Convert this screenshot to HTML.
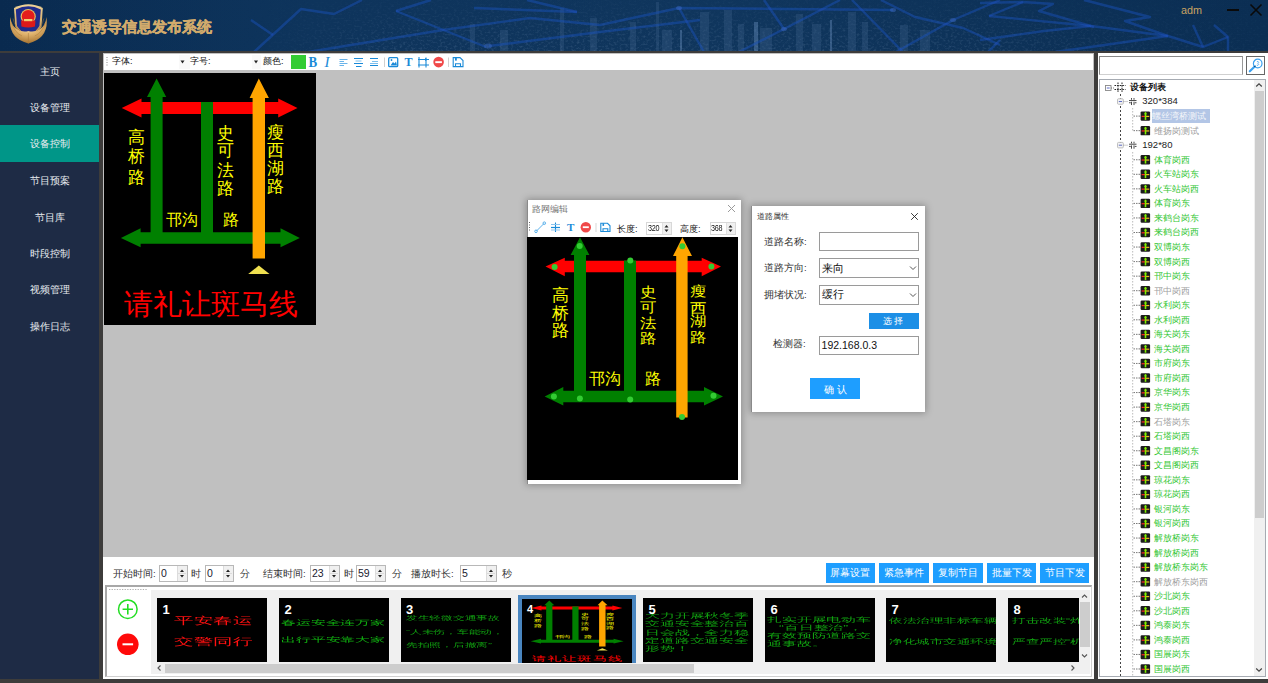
<!DOCTYPE html>
<html><head><meta charset="utf-8">
<style>
*{margin:0;padding:0;box-sizing:border-box}
html,body{width:1268px;height:683px;overflow:hidden;background:#3d3c3b;font-family:"Liberation Sans",sans-serif;position:relative}
.abs{position:absolute}
.t{position:absolute;white-space:nowrap;line-height:1}
#hdr{left:0;top:0;width:1268px;height:51px;background:linear-gradient(90deg,#092a4f 0%,#0a2f56 20%,#0b3056 55%,#0b2f55 80%,#0b2e53 100%);overflow:hidden}
#title{left:62.3px;top:18.9px;font-size:15.3px;font-weight:bold;color:#d2ab6c;-webkit-text-stroke:0.35px #d2ab6c}
#adm{left:1181px;top:5.3px;font-size:10.8px;color:#c8a262}
#side{left:0;top:53px;width:99px;height:626px;background:#1e2b45}
.mi{position:absolute;left:0;width:99px;height:37px;line-height:37px;text-align:center;color:#e8ecf0;font-size:10px}
.mi.act{background:#009688}
#main{left:103px;top:53px;width:991px;height:504px;background:#c0c0c0}
#tb{left:104px;top:54px;width:989px;height:16px;background:#fff}
#right{left:1098px;top:53px;width:170px;height:626px;background:#fff}
#bot{left:103px;top:557px;width:991px;height:122px;background:#fff}
.tbt{font-size:9px;color:#111;top:57px}
</style></head><body>
<div id="hdr" class="abs">
 <svg class="abs" style="left:0;top:0" width="1268" height="51">
  <defs>
   <linearGradient id="cityg" x1="0" x2="1" y1="0" y2="0"><stop offset="0" stop-color="#18406a" stop-opacity="0"/><stop offset="0.25" stop-color="#18406a" stop-opacity="0.3"/><stop offset="0.6" stop-color="#18406a" stop-opacity="0.35"/><stop offset="0.85" stop-color="#18406a" stop-opacity="0.1"/><stop offset="1" stop-color="#18406a" stop-opacity="0"/></linearGradient>
   <filter id="soft"><feGaussianBlur stdDeviation="0.7"/></filter>
   <filter id="noise" x="0" y="0" width="100%" height="100%"><feTurbulence type="fractalNoise" baseFrequency="0.35 0.5" numOctaves="2" seed="3"/><feColorMatrix type="matrix" values="0 0 0 0 0.35  0 0 0 0 0.5  0 0 0 0 0.7  0 0 0 1.6 -0.75"/></filter>
   <linearGradient id="vfade" x1="0" x2="0" y1="0" y2="1"><stop offset="0" stop-color="#fff" stop-opacity="0.2"/><stop offset="1" stop-color="#fff" stop-opacity="1"/></linearGradient>
   <mask id="cm"><rect x="0" y="0" width="1268" height="51" fill="url(#vfade)"/></mask>
  </defs>
  <rect x="0" y="0" width="1268" height="51" fill="url(#cityg)"/>
  <linearGradient id="hfade" x1="0" x2="1" y1="0" y2="0"><stop offset="0" stop-color="#fff" stop-opacity="0"/><stop offset="0.15" stop-color="#fff" stop-opacity="1"/><stop offset="0.7" stop-color="#fff" stop-opacity="1"/><stop offset="1" stop-color="#fff" stop-opacity="0.25"/></linearGradient>
  <mask id="cm2"><rect x="240" y="0" width="1028" height="51" fill="url(#hfade)"/></mask>
  <g mask="url(#cm2)"><g mask="url(#cm)"><rect x="240" y="0" width="1028" height="51" filter="url(#noise)" opacity="0.3"/></g></g>
  <g fill="#3a5f88" opacity="0.35" filter="url(#soft)">
   <rect x="656" y="2" width="3" height="49"/><rect x="662" y="30" width="10" height="21"/><rect x="700" y="12" width="9" height="39"/>
   <rect x="724" y="10" width="8" height="41"/><rect x="738" y="24" width="6" height="27"/><rect x="760" y="28" width="12" height="23"/>
   <rect x="796" y="14" width="7" height="37"/><rect x="812" y="24" width="9" height="27"/><rect x="848" y="12" width="8" height="39"/>
   <rect x="862" y="22" width="6" height="29"/><rect x="900" y="25" width="8" height="26"/><rect x="920" y="30" width="10" height="21"/>
   <rect x="560" y="8" width="4" height="43"/><rect x="590" y="18" width="7" height="33"/><rect x="630" y="22" width="6" height="29"/>
   <rect x="470" y="24" width="5" height="27"/><rect x="500" y="30" width="8" height="21"/>
  </g>
  <g fill="#7aa0d0" opacity="0.35"><rect x="754" y="22" width="4" height="29"/><rect x="680" y="30" width="2" height="21"/><rect x="830" y="20" width="2" height="31"/></g>
  <g stroke="#1d52c0" stroke-opacity="0.45" stroke-width="2.4" fill="none" stroke-linejoin="round" filter="url(#soft)">
   <path d="M254 52 L301 9 L334 14 L362 0"/>
   <path d="M251 20 L273 35"/>
   <path d="M308 52 L443 30 L530 18 L600 25 L679 8 L893 10"/>
   <path d="M396 11 L486 47"/>
   <path d="M396 11 L431 0"/>
   <path d="M474 8 L577 12"/>
   <path d="M489 46 L600 32 L700 20"/>
   <path d="M527 0 L577 12"/>
   <path d="M679 8 L704 52"/>
   <path d="M764 0 L784 29 L739 52"/>
   <path d="M784 29 L840 0"/>
   <path d="M852 0 L903 52"/>
   <path d="M881 0 L915 17 L963 28 L1000 45"/>
   <path d="M896 52 L953 20 L1000 0"/>
   <path d="M988 52 L1000 40"/>
   <path d="M980 3 L1023 2 L1053 4 L1039 11 L1094 27"/>
   <path d="M989 16 L1023 2"/>
   <path d="M989 16 L1091 26 L1168 36 L1203 47 L1228 37"/>
   <path d="M1084 0 L1150 17 L1125 21 L1168 36"/>
   <path d="M980 40 L1044 31 L1091 26"/>
   <path d="M1055 52 L1168 36"/>
   <path d="M1193 25 L1203 47"/>
   <path d="M1214 25 L1228 37 L1228 52"/>
  </g>
  <g fill="#3a68c0" opacity="0.5"><ellipse cx="488" cy="46" rx="4" ry="2.5"/><ellipse cx="679" cy="8" rx="3" ry="2"/><ellipse cx="784" cy="29" rx="3" ry="2"/><ellipse cx="893" cy="10" rx="3" ry="2"/><ellipse cx="953" cy="20" rx="3" ry="2"/></g>
 </svg>
 <svg class="abs" style="left:8px;top:3px" width="42" height="42" viewBox="0 0 42 42">
  <defs><radialGradient id="gold" cx="50%" cy="30%" r="75%"><stop offset="0" stop-color="#f8e6b8"/><stop offset="0.5" stop-color="#deb06a"/><stop offset="1" stop-color="#9a6828"/></radialGradient>
  <linearGradient id="gold2" x1="0" y1="0" x2="0" y2="1"><stop offset="0" stop-color="#f0d498"/><stop offset="1" stop-color="#b8853e"/></linearGradient></defs>
  <path d="M6 5 Q20.4 -2.5 34.8 5 L33.5 24 Q28 33 20.4 36 Q12.8 33 7.3 24 Z" fill="url(#gold2)"/>
  <path d="M7.8 6.5 Q20.4 0 32.8 6.5 L31.4 23 Q26.5 30.5 20.4 33 Q14.3 30.5 9 23 Z" fill="#1f2c8c"/>
  <circle cx="20.2" cy="13.6" r="7.6" fill="#e6be60"/>
  <circle cx="20.2" cy="13.4" r="6.4" fill="#e41c1c"/>
  <path d="M13 17.5 H27.4 L27 23.5 Q20.2 25.5 13.4 23.5 Z" fill="#dc1a1a"/>
  <rect x="16" y="16" width="8.4" height="2.2" fill="#f0d070"/>
  <path d="M2.3 14 Q-0.5 35 20.4 40.5 Q41.3 35 38.5 14 Q37.5 23 31.5 26.5 Q26 29.5 20.4 28 Q14.8 29.5 9.3 26.5 Q3.3 23 2.3 14 Z" fill="url(#gold)"/>
  <g stroke="#a8783a" stroke-width="0.7" fill="none" opacity="0.7"><path d="M3.5 20 Q7 30 14 33 M5 15.5 Q7 24 12 28 M37.3 20 Q33.8 30 26.8 33 M35.8 15.5 Q33.8 24 28.8 28 M20.4 30 V40.5"/></g>
 </svg>
 <div id="title" class="t">交通诱导信息发布系统</div>
 <div id="adm" class="t">adm</div>
 <div class="abs" style="left:1227px;top:9px;width:12px;height:2px;background:#0a0a0a"></div>
 <svg class="abs" style="left:1249px;top:3px" width="14" height="14"><path d="M1.5 1.5 L12.5 12.5 M12.5 1.5 L1.5 12.5" stroke="#0a0a0a" stroke-width="1.6"/></svg>
</div>
<div id="side" class="abs">
 <div class="mi" style="top:0">主页</div>
 <div class="mi" style="top:36.4px">设备管理</div>
 <div class="mi act" style="top:72px">设备控制</div>
 <div class="mi" style="top:109.2px">节目预案</div>
 <div class="mi" style="top:145.6px">节目库</div>
 <div class="mi" style="top:182px">时段控制</div>
 <div class="mi" style="top:218.4px">视频管理</div>
 <div class="mi" style="top:254.8px">操作日志</div>
</div>
<div id="main" class="abs"></div>
<div id="tb" class="abs"></div>
<svg class="abs" style="left:104px;top:54px" width="989" height="16">
 <g fill="#888"><rect x="2.5" y="3" width="1" height="1"/><rect x="2.5" y="5.5" width="1" height="1"/><rect x="2.5" y="8" width="1" height="1"/><rect x="2.5" y="10.5" width="1" height="1"/></g>
 <rect x="75" y="1" width="11" height="14" fill="#f9f9f9"/>
 <path d="M76.5 6.5 L80.5 6.5 L78.5 9.5 Z" fill="#222"/>
 <rect x="148" y="1" width="9" height="14" fill="#f9f9f9"/>
 <path d="M150 6.5 L154 6.5 L152 9.5 Z" fill="#222"/>
 <rect x="187" y="1" width="15" height="14" fill="#33cc33"/>
 <text x="0" y="0" transform="translate(204.6 13.3) scale(0.84 1)" font-family="Liberation Serif" font-weight="bold" font-size="15.5" fill="#1a8ad8">B</text>
 <text x="220.5" y="13.3" font-family="Liberation Serif" font-style="italic" font-size="15" fill="#1a8ad8">I</text>
 <g stroke="#6ab4ea" stroke-width="1"><path d="M235.5 5.5 H243.5 M235.5 7.5 H240 M235.5 9.5 H243.5 M235.5 11.5 H240"/></g>
 <g stroke="#1a8ad8" stroke-width="1"><path d="M250 4.5 H259 M250 9.5 H259 M252 12.5 H257.5"/></g><g stroke="#7cc0ee" stroke-width="1"><path d="M251.5 7 H257.5"/></g>
 <g stroke="#1a8ad8" stroke-width="1"><path d="M266 4.5 H274 M266 11.5 H274"/></g><g stroke="#7cc0ee" stroke-width="1"><path d="M268 7.5 H274 M266 9.5 H274"/></g>
 <rect x="280" y="3.5" width="1" height="9.5" fill="#d0d0d0"/>
 <g fill="none" stroke="#1a8ad8" stroke-width="1.3"><rect x="284.7" y="3.7" width="9" height="9" rx="1"/></g>
 <path d="M286.5 11.5 L289 8 L290.5 9.5 L292 7.5 L293 11.5 Z" fill="#1a8ad8"/><circle cx="287.5" cy="6" r="0.9" fill="#1a8ad8"/>
 <text x="300.5" y="12" font-family="Liberation Serif" font-weight="bold" font-size="12" fill="#1a8ad8">T</text>
 <g stroke="#1a8ad8" stroke-width="1.1" fill="none"><path d="M315 3 V13.5 M322 3.5 V13.5 M314 5.5 H325 M314 11 H325"/></g><path d="M321 4 L324 5.5 L321 7 Z" fill="#1a8ad8"/>
 <circle cx="334.6" cy="8.1" r="5.3" fill="#f04848"/><rect x="331.3" y="7.2" width="6.6" height="1.9" fill="#fff"/>
 <rect x="344" y="3.5" width="1" height="9.5" fill="#d0d0d0"/>
 <g fill="none" stroke="#1a8ad8" stroke-width="1.1"><path d="M349.2 3.6 H356 L359 6.6 V12.6 H349.2 Z"/><path d="M351.5 12.6 V9.8 H356.5 V12.6"/></g><rect x="351" y="3.6" width="1.8" height="3" fill="#1a8ad8"/>
</svg>
<div class="t" style="left:112px;top:56.5px;font-size:9px;color:#111">字体:</div>
<div class="t" style="left:190px;top:56.5px;font-size:9px;color:#111">字号:</div>
<div class="t" style="left:263px;top:56.5px;font-size:9px;color:#111">颜色:</div>

<svg class="abs" style="left:104px;top:73px" width="212" height="252" viewBox="0 0 212 252"><g id="ledmain">
 <rect width="212" height="252" fill="#000"/>
 <!-- red arrow -->
 <path d="M17.7 35 L37.5 25.6 L37.5 29 L174.2 29 L174.2 25.6 L193.5 35 L174.2 44.6 L174.2 41 L37.5 41 L37.5 44.6 Z" fill="#ff0000"/>
 <!-- green horizontal -->
 <path d="M16.9 165 L36.6 155.3 L36.6 159.2 L176.5 159.2 L176.5 155.3 L195.8 165 L176.5 174.2 L176.5 170.7 L36.6 170.7 L36.6 174.2 Z" fill="#008000"/>
 <!-- green 1 -->
 <path d="M52.6 5.5 L62.2 24 L58.6 24 L58.6 165 L46.6 165 L46.6 24 L43 24 Z" fill="#008000"/>
 <rect x="97" y="29" width="12" height="136" fill="#008000"/>
 <!-- orange -->
 <path d="M154.8 5.5 L164.9 24.9 L161 24.9 L161 185.6 L148.6 185.6 L148.6 24.9 L145.6 24.9 Z" fill="#ffa500"/>
 <path d="M154.8 192.6 L165.5 201 L144.2 201 Z" fill="#f0e050"/>
 <g fill="#ffff00" font-size="16.5" font-family="Liberation Sans" text-anchor="middle">
  <text x="32.5" y="69.6">高</text><text x="32.5" y="88.8">桥</text><text x="32.5" y="110.3">路</text>
  <text x="121.5" y="66.1">史</text><text x="121.5" y="83.1">可</text><text x="121.5" y="102.9">法</text><text x="121.5" y="120.6">路</text>
  <text x="171" y="65.1">瘦</text><text x="171" y="82.7">西</text><text x="171" y="101.2">湖</text><text x="171" y="118.8">路</text>
  <text x="78" y="152.2" font-size="15.8">邗沟</text>
  <text x="127" y="152.2" font-size="15.8">路</text>
 </g>
 <text x="106.6" y="241" fill="#ff0000" font-size="28.8" font-family="Liberation Sans" text-anchor="middle">请礼让斑马线</text>
</g></svg>

<div class="abs" style="left:527px;top:199.5px;width:214px;height:284px;background:#fff;box-shadow:0 0 7px 1px rgba(0,0,0,0.28);border-left:1px solid #8a8a8a"></div>
<div class="t" style="left:532px;top:204.5px;font-size:9px;color:#777">路网编辑</div>
<svg class="abs" style="left:727px;top:204px" width="9" height="9"><path d="M1 1 L8 8 M8 1 L1 8" stroke="#9a9a9a" stroke-width="1"/></svg>
<svg class="abs" style="left:527px;top:219px" width="214" height="17">
 <g fill="#666"><rect x="2" y="3" width="1" height="1"/><rect x="2" y="5.5" width="1" height="1"/><rect x="2" y="8" width="1" height="1"/><rect x="2" y="10.5" width="1" height="1"/></g>
 <g stroke="#4aa8e8" stroke-width="0.9" fill="none"><path d="M9.5 12 L17 4.5"/><circle cx="9" cy="12.3" r="1.3"/><circle cx="17.3" cy="4.2" r="1.3"/></g>
 <g stroke="#1a8ad8" fill="none"><path d="M28.5 3.5 V13" stroke-width="1.1"/><path d="M24 8.5 H33" stroke-width="1.2"/><path d="M24 5.5 H33 M24 11 H33" stroke="#8cc4ee" stroke-width="1"/></g>
 <text x="40" y="12" font-family="Liberation Serif" font-weight="bold" font-size="11" fill="#1a8ad8">T</text>
 <circle cx="58.8" cy="8.2" r="5.2" fill="#f04848"/><rect x="55.8" y="7.3" width="6" height="1.8" fill="#fff"/>
 <rect x="68.5" y="4" width="1" height="9" fill="#d8d8d8"/>
 <g fill="none" stroke="#1a8ad8" stroke-width="1.1"><path d="M73.8 4.3 H80.5 L83 6.8 V12.5 H73.8 Z"/><path d="M76 12.5 V9.8 H80.8 V12.5"/></g><rect x="75.5" y="4.3" width="1.6" height="2.6" fill="#1a8ad8"/>
</svg>
<div class="t" style="left:617px;top:224.5px;font-size:9px;color:#111">长度:</div>
<div class="t" style="left:680px;top:224.5px;font-size:9px;color:#111">高度:</div>
<div class="abs" style="left:646px;top:222px;width:26px;height:13px;border:1px solid #d8d8d8;background:#fff"></div>
<div class="t" style="left:648px;top:223.5px;font-size:8.5px;color:#111;letter-spacing:-0.3px;transform:scaleX(0.85);transform-origin:left">320</div>
<div class="abs" style="left:662px;top:223px;width:9px;height:11px;background:#f0f0f0;border-left:1px solid #e0e0e0"></div>
<svg class="abs" style="left:662px;top:223px" width="9" height="11"><path d="M2.5 4.5 L4.5 2 L6.5 4.5 Z M2.5 6.5 L4.5 9 L6.5 6.5 Z" fill="#222"/></svg>
<div class="abs" style="left:710px;top:222px;width:26px;height:13px;border:1px solid #d8d8d8;background:#fff"></div>
<div class="t" style="left:711px;top:223.5px;font-size:8.5px;color:#111;letter-spacing:-0.3px;transform:scaleX(0.85);transform-origin:left">368</div>
<div class="abs" style="left:726px;top:223px;width:9px;height:11px;background:#f0f0f0;border-left:1px solid #e0e0e0"></div>
<svg class="abs" style="left:726px;top:223px" width="9" height="11"><path d="M2.5 4.5 L4.5 2 L6.5 4.5 Z M2.5 6.5 L4.5 9 L6.5 6.5 Z" fill="#222"/></svg>
<svg class="abs" style="left:527px;top:236.5px" width="211" height="243" viewBox="0 0 211 243">
 <rect width="211" height="243" fill="#000"/>
 <path d="M18.5 29.5 L37.8 20.7 L37.8 23.7 L174.7 23.7 L174.7 20.7 L194 29.5 L174.7 39.2 L174.7 35.3 L37.8 35.3 L37.8 39.2 Z" fill="#ff0000"/>
 <path d="M17.7 159.5 L36.3 150 L36.3 153.7 L177 153.7 L177 150 L196 159.5 L177 168.5 L177 165.3 L36.3 165.3 L36.3 168.5 Z" fill="#008000"/>
 <path d="M53 0.2 L62.4 18 L59 18 L59 160 L47 160 L47 18 L43.6 18 Z" fill="#008000"/>
 <rect x="97" y="23.5" width="12" height="136" fill="#008000"/>
 <path d="M155.4 0.2 L165 19 L160.6 19 L160.6 180.5 L149.2 180.5 L149.2 19 L146 19 Z" fill="#ffa500"/>
 <g fill="#ffff00" font-size="17" font-family="Liberation Sans" text-anchor="middle">
  <text x="33.6" y="64">高</text><text x="33.6" y="81.5">桥</text><text x="33.6" y="99">路</text>
  <text transform="translate(121.7 60.4) scale(1 0.85)">史</text><text transform="translate(121.7 75.2) scale(1 0.85)">可</text><text transform="translate(121.7 91.2) scale(1 0.85)">法</text><text transform="translate(121.7 105.9) scale(1 0.85)">路</text>
  <text transform="translate(171.5 58.8) scale(1 0.85)">瘦</text><text transform="translate(171.5 75.7) scale(1 0.85)">西</text><text transform="translate(171.5 89.2) scale(1 0.85)">湖</text><text transform="translate(171.5 105) scale(1 0.85)">路</text>
  <text x="78" y="147.2" font-size="16">邗沟</text>
  <text x="125.6" y="147.2" font-size="16">路</text>
 </g>
 <g fill="#33cc33">
  <circle cx="27.6" cy="29.9" r="3"/><circle cx="52.7" cy="9" r="3"/><circle cx="103.3" cy="23.4" r="3"/><circle cx="155.4" cy="9.3" r="3"/><circle cx="184.4" cy="29.5" r="3"/>
  <circle cx="26.9" cy="159.5" r="3"/><circle cx="52.9" cy="161.5" r="3"/><circle cx="103.2" cy="162.6" r="3"/><circle cx="155" cy="180" r="3"/><circle cx="186.5" cy="158.7" r="3"/>
 </g>
</svg>

<div class="abs" style="left:751px;top:206px;width:174px;height:206px;background:#fff;box-shadow:0 0 7px 1px rgba(0,0,0,0.28);border-left:1px solid #8a8a8a"></div>
<div class="t" style="left:757px;top:212px;font-size:8.3px;color:#333">道路属性</div>
<svg class="abs" style="left:910px;top:212px" width="9" height="9"><path d="M1.2 1.2 L7.8 7.8 M7.8 1.2 L1.2 7.8" stroke="#222" stroke-width="0.9"/></svg>
<div class="t" style="left:764px;top:237px;font-size:9.5px;color:#333">道路名称:</div>
<div class="t" style="left:764px;top:263px;font-size:9.5px;color:#333">道路方向:</div>
<div class="t" style="left:764px;top:290px;font-size:9.5px;color:#333">拥堵状况:</div>
<div class="t" style="left:773px;top:338.5px;font-size:9.5px;color:#333">检测器:</div>
<div class="abs" style="left:819px;top:232px;width:100px;height:19px;border:1px solid #9a9a9a;background:#fff"></div>
<div class="abs" style="left:819px;top:258px;width:100px;height:20px;border:1px solid #9a9a9a;background:#fff"></div>
<div class="t" style="left:822px;top:262.5px;font-size:11px;color:#111">来向</div>
<svg class="abs" style="left:909px;top:265px" width="8" height="6"><path d="M1 1.5 L4 4.5 L7 1.5" stroke="#555" stroke-width="1" fill="none"/></svg>
<div class="abs" style="left:819px;top:285px;width:100px;height:20px;border:1px solid #9a9a9a;background:#fff"></div>
<div class="t" style="left:822px;top:289px;font-size:11px;color:#111">缓行</div>
<svg class="abs" style="left:909px;top:292px" width="8" height="6"><path d="M1 1.5 L4 4.5 L7 1.5" stroke="#555" stroke-width="1" fill="none"/></svg>
<div class="abs" style="left:869px;top:313px;width:50px;height:16px;background:#1c8fe6"></div>
<div class="t" style="left:869px;top:316.5px;width:50px;text-align:center;font-size:9px;color:#fff;letter-spacing:2px">选择</div>
<div class="abs" style="left:819px;top:335.5px;width:100px;height:19px;border:1px solid #9a9a9a;background:#fff"></div>
<div class="t" style="left:821.6px;top:339.5px;font-size:10.5px;color:#111">192.168.0.3</div>
<div class="abs" style="left:810px;top:378px;width:50px;height:21px;background:#1e9eff"></div>
<div class="t" style="left:812px;top:384.5px;width:50px;text-align:center;font-size:9.5px;color:#fff;letter-spacing:3px">确认</div>

<div id="bot" class="abs"></div>
<div class="t" style="left:113px;top:568.5px;font-size:9.5px;color:#333">开始时间:</div>
<div class="abs" style="left:159px;top:565px;width:29px;height:17px;border:1px solid #b8b8b8;background:#fff"></div>
<div class="t" style="left:161px;top:568px;font-size:10.5px;color:#1a1a30">0</div>
<div class="abs" style="left:177px;top:566px;width:10px;height:15px;background:#f0f0f0;border-left:1px solid #dcdcdc"></div>
<svg class="abs" style="left:177px;top:566px" width="10" height="15"><path d="M3 6 L5 3.5 L7 6 Z M3 9 L5 11.5 L7 9 Z" fill="#222"/><path d="M1 7.5 H9" stroke="#ccc" stroke-width="0.6"/></svg>
<div class="t" style="left:191px;top:568.5px;font-size:9.5px;color:#333">时</div>
<div class="abs" style="left:205px;top:565px;width:29px;height:17px;border:1px solid #b8b8b8;background:#fff"></div>
<div class="t" style="left:207px;top:568px;font-size:10.5px;color:#1a1a30">0</div>
<div class="abs" style="left:223px;top:566px;width:10px;height:15px;background:#f0f0f0;border-left:1px solid #dcdcdc"></div>
<svg class="abs" style="left:223px;top:566px" width="10" height="15"><path d="M3 6 L5 3.5 L7 6 Z M3 9 L5 11.5 L7 9 Z" fill="#222"/><path d="M1 7.5 H9" stroke="#ccc" stroke-width="0.6"/></svg>
<div class="t" style="left:240px;top:568.5px;font-size:9.5px;color:#333">分</div>
<div class="t" style="left:263px;top:568.5px;font-size:9.5px;color:#333">结束时间:</div>
<div class="abs" style="left:310px;top:565px;width:30px;height:17px;border:1px solid #b8b8b8;background:#fff"></div>
<div class="t" style="left:312px;top:568px;font-size:10.5px;color:#1a1a30">23</div>
<div class="abs" style="left:329px;top:566px;width:10px;height:15px;background:#f0f0f0;border-left:1px solid #dcdcdc"></div>
<svg class="abs" style="left:329px;top:566px" width="10" height="15"><path d="M3 6 L5 3.5 L7 6 Z M3 9 L5 11.5 L7 9 Z" fill="#222"/><path d="M1 7.5 H9" stroke="#ccc" stroke-width="0.6"/></svg>
<div class="t" style="left:344px;top:568.5px;font-size:9.5px;color:#333">时</div>
<div class="abs" style="left:356px;top:565px;width:30px;height:17px;border:1px solid #b8b8b8;background:#fff"></div>
<div class="t" style="left:358px;top:568px;font-size:10.5px;color:#1a1a30">59</div>
<div class="abs" style="left:375px;top:566px;width:10px;height:15px;background:#f0f0f0;border-left:1px solid #dcdcdc"></div>
<svg class="abs" style="left:375px;top:566px" width="10" height="15"><path d="M3 6 L5 3.5 L7 6 Z M3 9 L5 11.5 L7 9 Z" fill="#222"/><path d="M1 7.5 H9" stroke="#ccc" stroke-width="0.6"/></svg>
<div class="t" style="left:392px;top:568.5px;font-size:9.5px;color:#333">分</div>
<div class="t" style="left:411px;top:568.5px;font-size:9.5px;color:#333">播放时长:</div>
<div class="abs" style="left:460px;top:565px;width:37px;height:17px;border:1px solid #b8b8b8;background:#fff"></div>
<div class="t" style="left:462px;top:568px;font-size:10.5px;color:#1a1a30">5</div>
<div class="abs" style="left:486px;top:566px;width:10px;height:15px;background:#f0f0f0;border-left:1px solid #dcdcdc"></div>
<svg class="abs" style="left:486px;top:566px" width="10" height="15"><path d="M3 6 L5 3.5 L7 6 Z M3 9 L5 11.5 L7 9 Z" fill="#222"/><path d="M1 7.5 H9" stroke="#ccc" stroke-width="0.6"/></svg>
<div class="t" style="left:502px;top:568.5px;font-size:9.5px;color:#333">秒</div>
<div class="abs" style="left:825.6px;top:563px;width:49.6px;height:19.7px;background:#1e9eff"></div>
<div class="t" style="left:825.6px;top:567.5px;width:49.6px;text-align:center;font-size:10px;color:#fff">屏幕设置</div>
<div class="abs" style="left:879px;top:563px;width:49.6px;height:19.7px;background:#1e9eff"></div>
<div class="t" style="left:879px;top:567.5px;width:49.6px;text-align:center;font-size:10px;color:#fff">紧急事件</div>
<div class="abs" style="left:933px;top:563px;width:49.6px;height:19.7px;background:#1e9eff"></div>
<div class="t" style="left:933px;top:567.5px;width:49.6px;text-align:center;font-size:10px;color:#fff">复制节目</div>
<div class="abs" style="left:986.8px;top:563px;width:49.6px;height:19.7px;background:#1e9eff"></div>
<div class="t" style="left:986.8px;top:567.5px;width:49.6px;text-align:center;font-size:10px;color:#fff">批量下发</div>
<div class="abs" style="left:1039.9px;top:563px;width:49.6px;height:19.7px;background:#1e9eff"></div>
<div class="t" style="left:1039.9px;top:567.5px;width:49.6px;text-align:center;font-size:10px;color:#fff">节目下发</div>
<div class="abs" style="left:105px;top:585px;width:987px;height:92px;border:2px solid #a8a8a8;border-right:1px solid #d0d0d0;border-bottom:1px solid #d0d0d0;background:#fff"></div>
<div class="abs" style="left:151px;top:589.5px;width:939px;height:84px;background:#f0f0f0"></div>
<svg class="abs" style="left:108px;top:588px" width="40" height="3"><path d="M1 1.5 H39" stroke="#b0b0b0" stroke-width="1" stroke-dasharray="1.3 1.3"/></svg>
<svg class="abs" style="left:116px;top:598px" width="24" height="60"><circle cx="11.8" cy="11.2" r="9.3" fill="none" stroke="#22dd22" stroke-width="1.5"/><path d="M11.8 6 V16.5 M6.6 11.2 H17" stroke="#22dd22" stroke-width="1.6"/><circle cx="11.8" cy="46.3" r="10.8" fill="#ff0a0a"/><rect x="6.5" y="45.3" width="10.6" height="2" fill="#fff"/></svg>
<div class="abs" style="left:518px;top:594.5px;width:118px;height:69px;background:#4a86c0"></div>
<div class="abs" style="left:151px;top:589.5px;width:928px;height:73.5px;overflow:hidden">
<div class="abs" style="left:6px;top:8.5px;width:110px;height:64px;background:#000;overflow:hidden"><div class="t" style="left:17px;top:17.5px;font-size:10px;color:#ff1010;transform:scaleX(1.95);transform-origin:0 0">平安春运</div><div class="t" style="left:17px;top:39px;font-size:10px;color:#ff1010;transform:scaleX(1.95);transform-origin:0 0">交警同行</div><div class="t" style="left:5.5px;top:5px;font-size:13px;font-weight:bold;color:#fff">1</div></div>
<div class="abs" style="left:128px;top:8.5px;width:110px;height:64px;background:#000;overflow:hidden"><div class="t" style="left:2px;top:21px;font-size:7px;color:#10b010;transform:scaleX(2.12);transform-origin:0 0">春运安全连万家</div><div class="t" style="left:2px;top:37.5px;font-size:7px;color:#10b010;transform:scaleX(2.12);transform-origin:0 0">出行平安靠大家</div><div class="t" style="left:5.5px;top:5px;font-size:13px;font-weight:bold;color:#fff">2</div></div>
<div class="abs" style="left:249.5px;top:8.5px;width:110px;height:64px;background:#000;overflow:hidden"><div class="t" style="left:5.5px;top:17px;font-size:6.2px;color:#10a010;transform:scaleX(1.95);transform-origin:0 0">发生轻微交通事故</div><div class="t" style="left:5.5px;top:30.5px;font-size:6.2px;color:#10a010;transform:scaleX(1.95);transform-origin:0 0">“人未伤，车能动，</div><div class="t" style="left:5.5px;top:43.5px;font-size:6.2px;color:#10a010;transform:scaleX(1.95);transform-origin:0 0">先拍照，后撤离”</div><div class="t" style="left:5.5px;top:5px;font-size:13px;font-weight:bold;color:#fff">3</div></div>
<div class="abs" style="left:492px;top:8.5px;width:110px;height:64px;background:#000;overflow:hidden"><div class="t" style="left:2px;top:13.7px;font-size:7px;color:#10a010;transform:scaleX(2.12);transform-origin:0 0">大力开展秋冬季</div><div class="t" style="left:2px;top:22px;font-size:7px;color:#10a010;transform:scaleX(2.12);transform-origin:0 0">交通安全整治百</div><div class="t" style="left:2px;top:30.5px;font-size:7px;color:#10a010;transform:scaleX(2.12);transform-origin:0 0">日会战，全力稳</div><div class="t" style="left:2px;top:39px;font-size:7px;color:#10a010;transform:scaleX(2.12);transform-origin:0 0">定道路交通安全</div><div class="t" style="left:2px;top:46.5px;font-size:7px;color:#10a010;transform:scaleX(2.12);transform-origin:0 0">形势！</div><div class="t" style="left:5.5px;top:5px;font-size:13px;font-weight:bold;color:#fff">5</div></div>
<div class="abs" style="left:614px;top:8.5px;width:110px;height:64px;background:#000;overflow:hidden"><div class="t" style="left:1.5px;top:17.5px;font-size:7px;color:#10a010;transform:scaleX(2.12);transform-origin:0 0">扎实开展电动车</div><div class="t" style="left:14px;top:25.5px;font-size:7px;color:#10a010;transform:scaleX(2.12);transform-origin:0 0">“百日整治”，</div><div class="t" style="left:1.5px;top:33.5px;font-size:7px;color:#10a010;transform:scaleX(2.12);transform-origin:0 0">有效预防道路交</div><div class="t" style="left:1.5px;top:41.5px;font-size:7px;color:#10a010;transform:scaleX(2.12);transform-origin:0 0">通事故。</div><div class="t" style="left:5.5px;top:5px;font-size:13px;font-weight:bold;color:#fff">6</div></div>
<div class="abs" style="left:735px;top:8.5px;width:110px;height:64px;background:#000;overflow:hidden"><div class="t" style="left:2.5px;top:19.5px;font-size:6.5px;color:#10a010;transform:scaleX(1.93);transform-origin:0 0">依法治理非标车辆</div><div class="t" style="left:2.5px;top:40.5px;font-size:6.5px;color:#10a010;transform:scaleX(1.93);transform-origin:0 0">净化城市交通环境</div><div class="t" style="left:5.5px;top:5px;font-size:13px;font-weight:bold;color:#fff">7</div></div>
<div class="abs" style="left:857px;top:8.5px;width:110px;height:64px;background:#000;overflow:hidden"><div class="t" style="left:3.5px;top:19.5px;font-size:6.5px;color:#10a010;transform:scaleX(1.93);transform-origin:0 0">打击改装“炸街”</div><div class="t" style="left:3.5px;top:40.5px;font-size:6.5px;color:#10a010;transform:scaleX(1.93);transform-origin:0 0">严查严控“机动车”</div><div class="t" style="left:5.5px;top:5px;font-size:13px;font-weight:bold;color:#fff">8</div></div>
</div>
<svg class="abs" style="left:522px;top:598.5px" width="110" height="64.5" viewBox="0 0 212 252" preserveAspectRatio="none"><use href="#ledmain"/></svg>
<div class="t" style="left:527px;top:604px;font-size:11px;font-weight:bold;color:#fff">4</div>
<div class="abs" style="left:151px;top:663px;width:928px;height:10px;background:#f0f0f0"></div>
<div class="abs" style="left:165px;top:663.5px;width:529px;height:9px;background:#cdcdcd"></div>
<svg class="abs" style="left:155px;top:663px" width="8" height="10"><path d="M5.5 2.5 L3 5 L5.5 7.5" stroke="#555" stroke-width="1.1" fill="none"/></svg>
<svg class="abs" style="left:1069px;top:663px" width="8" height="10"><path d="M2.5 2.5 L5 5 L2.5 7.5" stroke="#555" stroke-width="1.1" fill="none"/></svg>
<div class="abs" style="left:1079px;top:589.5px;width:11px;height:73.5px;background:#f0f0f0"></div>
<div class="abs" style="left:1079.5px;top:602px;width:10px;height:45px;background:#cdcdcd"></div>
<svg class="abs" style="left:1080px;top:592px" width="9" height="8"><path d="M2 5.5 L4.5 3 L7 5.5" stroke="#555" stroke-width="1.1" fill="none"/></svg>
<svg class="abs" style="left:1080px;top:652px" width="9" height="8"><path d="M2 2.5 L4.5 5 L7 2.5" stroke="#555" stroke-width="1.1" fill="none"/></svg>
<div id="right" class="abs"></div>
<div class="abs" style="left:1099px;top:56px;width:144px;height:19px;border:1px solid #888;border-bottom-color:#d0d0d0;border-right-color:#999;background:#fff"></div>
<div class="abs" style="left:1245.5px;top:56px;width:19.5px;height:19px;border:1px solid #666;background:#fff"></div>
<svg class="abs" style="left:1246px;top:57px" width="19" height="17"><circle cx="11.7" cy="6.5" r="4.3" fill="none" stroke="#3aa0f0" stroke-width="1.2"/><path d="M10.9 4.7 Q12.5 4 12.7 5.5 Q11.2 6.6 12.7 7.4 Q12.2 9 10.8 8.1" fill="none" stroke="#3aa0f0" stroke-width="0.8"/><path d="M9 9.3 L3.8 14.3" stroke="#3aa0f0" stroke-width="2.2" stroke-linecap="round"/><path d="M9.3 9 L8.5 9.8" stroke="#111" stroke-width="1"/></svg>
<div class="abs" style="left:1099px;top:78.5px;width:167px;height:598.5px;border:1px solid #a6abb2;background:#fff"></div>
<div class="abs" style="left:1254px;top:79.5px;width:10.5px;height:596.5px;background:#f0f0f0"></div>
<div class="abs" style="left:1254.5px;top:91px;width:9.5px;height:427px;background:#cdcdcd"></div>
<svg class="abs" style="left:1254px;top:81px" width="10" height="8"><path d="M2.2 5.5 L5 2.8 L7.8 5.5" stroke="#444" stroke-width="1.2" fill="none"/></svg>
<svg class="abs" style="left:1254px;top:666px" width="10" height="8"><path d="M2.2 2.5 L5 5.2 L7.8 2.5" stroke="#444" stroke-width="1.2" fill="none"/></svg>
<svg class="abs" style="left:1100px;top:79px" width="154" height="597">
<path d="M20.5 15 V597" stroke="#444" stroke-width="1" stroke-dasharray="2 2"/>
<path d="M32.700000000000045 29 V52.650000000000006" stroke="#bbb" stroke-width="1" stroke-dasharray="1.5 1.5"/>
<path d="M32.700000000000045 73 V597" stroke="#bbb" stroke-width="1" stroke-dasharray="1.5 1.5"/>
<rect x="5.5" y="6.5" width="5.5" height="5" fill="#fff" stroke="#888" stroke-width="0.9"/><path d="M6.7999999999999545 9 H9.700000000000045" stroke="#4a5ac0" stroke-width="0.9"/>
<path d="M11 9 H14" stroke="#555" stroke-width="0.8" stroke-dasharray="1 1"/>
<g stroke="#222" stroke-width="1" stroke-dasharray="1.6 1"><path d="M18 3.5 V13.5 M22 3.5 V13.5 M14.5 6.5 H25.5 M14.5 10.5 H25.5"/></g>
<rect x="17.5" y="19.75" width="5.8" height="5.5" rx="1" fill="#f4f4f4" stroke="#b8b8b8" stroke-width="0.9"/><path d="M18.799999999999955 22.549999999999997 H22" stroke="#4a5ac0" stroke-width="0.9"/>
<path d="M23.5 22.549999999999997 H28" stroke="#888" stroke-width="0.8" stroke-dasharray="1 1"/>
<g stroke="#333" stroke-width="0.9"><path d="M31.5 19.049999999999997 V20.75 M31.5 22.75 V26.049999999999997 M34 19.049999999999997 V20.75 M34 22.75 V26.049999999999997 M29 21.549999999999997 H36.5 M29 23.75 H30.799999999999955 M34.799999999999955 23.75 H36.5"/></g>
<rect x="17.5" y="63.39999999999998" width="5.8" height="5.5" rx="1" fill="#f4f4f4" stroke="#b8b8b8" stroke-width="0.9"/><path d="M18.799999999999955 66.19999999999999 H22" stroke="#4a5ac0" stroke-width="0.9"/>
<path d="M23.5 66.19999999999999 H28" stroke="#888" stroke-width="0.8" stroke-dasharray="1 1"/>
<g stroke="#333" stroke-width="0.9"><path d="M31.5 62.69999999999999 V64.39999999999998 M31.5 66.39999999999998 V69.69999999999999 M34 62.69999999999999 V64.39999999999998 M34 66.39999999999998 V69.69999999999999 M29 65.19999999999999 H36.5 M29 67.39999999999998 H30.799999999999955 M34.799999999999955 67.39999999999998 H36.5"/></g>
<path d="M33.5 37.099999999999994 H40.5" stroke="#555" stroke-width="0.8" stroke-dasharray="1.5 1"/>
<rect x="40.59999999999991" y="32.39999999999999" width="9.5" height="9.4" rx="1.2" fill="#1c1c1c"/>
<path d="M41.59999999999991 37.39999999999999 H45" stroke="#ff2020" stroke-width="1.2"/><path d="M46 37.39999999999999 H49.299999999999955" stroke="#f0c020" stroke-width="1.2"/>
<path d="M45.5 33.39999999999999 V40.89999999999999" stroke="#80f000" stroke-width="1.6"/><path d="M44 35.3 L45.5 33.099999999999994 L47 35.3" fill="#80f000"/>
<path d="M33.5 51.650000000000006 H40.5" stroke="#555" stroke-width="0.8" stroke-dasharray="1.5 1"/>
<rect x="40.59999999999991" y="46.95" width="9.5" height="9.4" rx="1.2" fill="#1c1c1c"/>
<path d="M41.59999999999991 51.95000000000002 H45" stroke="#ff2020" stroke-width="1.2"/><path d="M46 51.95000000000002 H49.299999999999955" stroke="#f0c020" stroke-width="1.2"/>
<path d="M45.5 47.95 V55.45000000000002" stroke="#80f000" stroke-width="1.6"/><path d="M44 49.849999999999994 L45.5 47.650000000000006 L47 49.849999999999994" fill="#80f000"/>
<path d="M33.5 80.75 H40.5" stroke="#555" stroke-width="0.8" stroke-dasharray="1.5 1"/>
<rect x="40.59999999999991" y="76.05000000000001" width="9.5" height="9.4" rx="1.2" fill="#1c1c1c"/>
<path d="M41.59999999999991 81.05000000000001 H45" stroke="#ff2020" stroke-width="1.2"/><path d="M46 81.05000000000001 H49.299999999999955" stroke="#f0c020" stroke-width="1.2"/>
<path d="M45.5 77.05000000000001 V84.55000000000001" stroke="#80f000" stroke-width="1.6"/><path d="M44 78.94999999999999 L45.5 76.75 L47 78.94999999999999" fill="#80f000"/>
<path d="M33.5 95.30000000000001 H40.5" stroke="#555" stroke-width="0.8" stroke-dasharray="1.5 1"/>
<rect x="40.59999999999991" y="90.60000000000002" width="9.5" height="9.4" rx="1.2" fill="#1c1c1c"/>
<path d="M41.59999999999991 95.60000000000002 H45" stroke="#ff2020" stroke-width="1.2"/><path d="M46 95.60000000000002 H49.299999999999955" stroke="#f0c020" stroke-width="1.2"/>
<path d="M45.5 91.60000000000002 V99.10000000000002" stroke="#80f000" stroke-width="1.6"/><path d="M44 93.5 L45.5 91.30000000000001 L47 93.5" fill="#80f000"/>
<path d="M33.5 109.85000000000002 H40.5" stroke="#555" stroke-width="0.8" stroke-dasharray="1.5 1"/>
<rect x="40.59999999999991" y="105.15000000000003" width="9.5" height="9.4" rx="1.2" fill="#1c1c1c"/>
<path d="M41.59999999999991 110.15000000000003 H45" stroke="#ff2020" stroke-width="1.2"/><path d="M46 110.15000000000003 H49.299999999999955" stroke="#f0c020" stroke-width="1.2"/>
<path d="M45.5 106.15000000000003 V113.65000000000003" stroke="#80f000" stroke-width="1.6"/><path d="M44 108.05000000000001 L45.5 105.85000000000002 L47 108.05000000000001" fill="#80f000"/>
<path d="M33.5 124.4 H40.5" stroke="#555" stroke-width="0.8" stroke-dasharray="1.5 1"/>
<rect x="40.59999999999991" y="119.70000000000002" width="9.5" height="9.4" rx="1.2" fill="#1c1c1c"/>
<path d="M41.59999999999991 124.70000000000002 H45" stroke="#ff2020" stroke-width="1.2"/><path d="M46 124.70000000000002 H49.299999999999955" stroke="#f0c020" stroke-width="1.2"/>
<path d="M45.5 120.70000000000002 V128.20000000000002" stroke="#80f000" stroke-width="1.6"/><path d="M44 122.6 L45.5 120.4 L47 122.6" fill="#80f000"/>
<path d="M33.5 138.95000000000002 H40.5" stroke="#555" stroke-width="0.8" stroke-dasharray="1.5 1"/>
<rect x="40.59999999999991" y="134.25000000000003" width="9.5" height="9.4" rx="1.2" fill="#1c1c1c"/>
<path d="M41.59999999999991 139.25000000000003 H45" stroke="#ff2020" stroke-width="1.2"/><path d="M46 139.25000000000003 H49.299999999999955" stroke="#f0c020" stroke-width="1.2"/>
<path d="M45.5 135.25000000000003 V142.75000000000003" stroke="#80f000" stroke-width="1.6"/><path d="M44 137.15 L45.5 134.95000000000002 L47 137.15" fill="#80f000"/>
<path d="M33.5 153.5 H40.5" stroke="#555" stroke-width="0.8" stroke-dasharray="1.5 1"/>
<rect x="40.59999999999991" y="148.8" width="9.5" height="9.4" rx="1.2" fill="#1c1c1c"/>
<path d="M41.59999999999991 153.8 H45" stroke="#ff2020" stroke-width="1.2"/><path d="M46 153.8 H49.299999999999955" stroke="#f0c020" stroke-width="1.2"/>
<path d="M45.5 149.8 V157.3" stroke="#80f000" stroke-width="1.6"/><path d="M44 151.7 L45.5 149.5 L47 151.7" fill="#80f000"/>
<path d="M33.5 168.05 H40.5" stroke="#555" stroke-width="0.8" stroke-dasharray="1.5 1"/>
<rect x="40.59999999999991" y="163.35000000000002" width="9.5" height="9.4" rx="1.2" fill="#1c1c1c"/>
<path d="M41.59999999999991 168.35000000000002 H45" stroke="#ff2020" stroke-width="1.2"/><path d="M46 168.35000000000002 H49.299999999999955" stroke="#f0c020" stroke-width="1.2"/>
<path d="M45.5 164.35000000000002 V171.85000000000002" stroke="#80f000" stroke-width="1.6"/><path d="M44 166.25 L45.5 164.05 L47 166.25" fill="#80f000"/>
<path d="M33.5 182.60000000000002 H40.5" stroke="#555" stroke-width="0.8" stroke-dasharray="1.5 1"/>
<rect x="40.59999999999991" y="177.90000000000003" width="9.5" height="9.4" rx="1.2" fill="#1c1c1c"/>
<path d="M41.59999999999991 182.90000000000003 H45" stroke="#ff2020" stroke-width="1.2"/><path d="M46 182.90000000000003 H49.299999999999955" stroke="#f0c020" stroke-width="1.2"/>
<path d="M45.5 178.90000000000003 V186.40000000000003" stroke="#80f000" stroke-width="1.6"/><path d="M44 180.8 L45.5 178.60000000000002 L47 180.8" fill="#80f000"/>
<path d="M33.5 197.14999999999998 H40.5" stroke="#555" stroke-width="0.8" stroke-dasharray="1.5 1"/>
<rect x="40.59999999999991" y="192.45" width="9.5" height="9.4" rx="1.2" fill="#1c1c1c"/>
<path d="M41.59999999999991 197.45 H45" stroke="#ff2020" stroke-width="1.2"/><path d="M46 197.45 H49.299999999999955" stroke="#f0c020" stroke-width="1.2"/>
<path d="M45.5 193.45 V200.95" stroke="#80f000" stroke-width="1.6"/><path d="M44 195.34999999999997 L45.5 193.14999999999998 L47 195.34999999999997" fill="#80f000"/>
<path d="M33.5 211.70000000000005 H40.5" stroke="#555" stroke-width="0.8" stroke-dasharray="1.5 1"/>
<rect x="40.59999999999991" y="207.00000000000006" width="9.5" height="9.4" rx="1.2" fill="#1c1c1c"/>
<path d="M41.59999999999991 212.00000000000006 H45" stroke="#ff2020" stroke-width="1.2"/><path d="M46 212.00000000000006 H49.299999999999955" stroke="#f0c020" stroke-width="1.2"/>
<path d="M45.5 208.00000000000006 V215.50000000000006" stroke="#80f000" stroke-width="1.6"/><path d="M44 209.90000000000003 L45.5 207.70000000000005 L47 209.90000000000003" fill="#80f000"/>
<path d="M33.5 226.25 H40.5" stroke="#555" stroke-width="0.8" stroke-dasharray="1.5 1"/>
<rect x="40.59999999999991" y="221.55" width="9.5" height="9.4" rx="1.2" fill="#1c1c1c"/>
<path d="M41.59999999999991 226.55 H45" stroke="#ff2020" stroke-width="1.2"/><path d="M46 226.55 H49.299999999999955" stroke="#f0c020" stroke-width="1.2"/>
<path d="M45.5 222.55 V230.05" stroke="#80f000" stroke-width="1.6"/><path d="M44 224.45 L45.5 222.25 L47 224.45" fill="#80f000"/>
<path d="M33.5 240.8 H40.5" stroke="#555" stroke-width="0.8" stroke-dasharray="1.5 1"/>
<rect x="40.59999999999991" y="236.10000000000002" width="9.5" height="9.4" rx="1.2" fill="#1c1c1c"/>
<path d="M41.59999999999991 241.10000000000002 H45" stroke="#ff2020" stroke-width="1.2"/><path d="M46 241.10000000000002 H49.299999999999955" stroke="#f0c020" stroke-width="1.2"/>
<path d="M45.5 237.10000000000002 V244.60000000000002" stroke="#80f000" stroke-width="1.6"/><path d="M44 239.0 L45.5 236.8 L47 239.0" fill="#80f000"/>
<path d="M33.5 255.35000000000002 H40.5" stroke="#555" stroke-width="0.8" stroke-dasharray="1.5 1"/>
<rect x="40.59999999999991" y="250.65000000000003" width="9.5" height="9.4" rx="1.2" fill="#1c1c1c"/>
<path d="M41.59999999999991 255.65000000000003 H45" stroke="#ff2020" stroke-width="1.2"/><path d="M46 255.65000000000003 H49.299999999999955" stroke="#f0c020" stroke-width="1.2"/>
<path d="M45.5 251.65000000000003 V259.15000000000003" stroke="#80f000" stroke-width="1.6"/><path d="M44 253.55 L45.5 251.35000000000002 L47 253.55" fill="#80f000"/>
<path d="M33.5 269.90000000000003 H40.5" stroke="#555" stroke-width="0.8" stroke-dasharray="1.5 1"/>
<rect x="40.59999999999991" y="265.20000000000005" width="9.5" height="9.4" rx="1.2" fill="#1c1c1c"/>
<path d="M41.59999999999991 270.20000000000005 H45" stroke="#ff2020" stroke-width="1.2"/><path d="M46 270.20000000000005 H49.299999999999955" stroke="#f0c020" stroke-width="1.2"/>
<path d="M45.5 266.20000000000005 V273.70000000000005" stroke="#80f000" stroke-width="1.6"/><path d="M44 268.1 L45.5 265.90000000000003 L47 268.1" fill="#80f000"/>
<path d="M33.5 284.45 H40.5" stroke="#555" stroke-width="0.8" stroke-dasharray="1.5 1"/>
<rect x="40.59999999999991" y="279.75" width="9.5" height="9.4" rx="1.2" fill="#1c1c1c"/>
<path d="M41.59999999999991 284.75 H45" stroke="#ff2020" stroke-width="1.2"/><path d="M46 284.75 H49.299999999999955" stroke="#f0c020" stroke-width="1.2"/>
<path d="M45.5 280.75 V288.25" stroke="#80f000" stroke-width="1.6"/><path d="M44 282.65 L45.5 280.45 L47 282.65" fill="#80f000"/>
<path d="M33.5 299.0 H40.5" stroke="#555" stroke-width="0.8" stroke-dasharray="1.5 1"/>
<rect x="40.59999999999991" y="294.3" width="9.5" height="9.4" rx="1.2" fill="#1c1c1c"/>
<path d="M41.59999999999991 299.3 H45" stroke="#ff2020" stroke-width="1.2"/><path d="M46 299.3 H49.299999999999955" stroke="#f0c020" stroke-width="1.2"/>
<path d="M45.5 295.3 V302.8" stroke="#80f000" stroke-width="1.6"/><path d="M44 297.2 L45.5 295.0 L47 297.2" fill="#80f000"/>
<path d="M33.5 313.55 H40.5" stroke="#555" stroke-width="0.8" stroke-dasharray="1.5 1"/>
<rect x="40.59999999999991" y="308.85" width="9.5" height="9.4" rx="1.2" fill="#1c1c1c"/>
<path d="M41.59999999999991 313.85 H45" stroke="#ff2020" stroke-width="1.2"/><path d="M46 313.85 H49.299999999999955" stroke="#f0c020" stroke-width="1.2"/>
<path d="M45.5 309.85 V317.35" stroke="#80f000" stroke-width="1.6"/><path d="M44 311.75 L45.5 309.55 L47 311.75" fill="#80f000"/>
<path d="M33.5 328.1 H40.5" stroke="#555" stroke-width="0.8" stroke-dasharray="1.5 1"/>
<rect x="40.59999999999991" y="323.40000000000003" width="9.5" height="9.4" rx="1.2" fill="#1c1c1c"/>
<path d="M41.59999999999991 328.40000000000003 H45" stroke="#ff2020" stroke-width="1.2"/><path d="M46 328.40000000000003 H49.299999999999955" stroke="#f0c020" stroke-width="1.2"/>
<path d="M45.5 324.40000000000003 V331.90000000000003" stroke="#80f000" stroke-width="1.6"/><path d="M44 326.3 L45.5 324.1 L47 326.3" fill="#80f000"/>
<path d="M33.5 342.65000000000003 H40.5" stroke="#555" stroke-width="0.8" stroke-dasharray="1.5 1"/>
<rect x="40.59999999999991" y="337.95000000000005" width="9.5" height="9.4" rx="1.2" fill="#1c1c1c"/>
<path d="M41.59999999999991 342.95000000000005 H45" stroke="#ff2020" stroke-width="1.2"/><path d="M46 342.95000000000005 H49.299999999999955" stroke="#f0c020" stroke-width="1.2"/>
<path d="M45.5 338.95000000000005 V346.45000000000005" stroke="#80f000" stroke-width="1.6"/><path d="M44 340.85 L45.5 338.65000000000003 L47 340.85" fill="#80f000"/>
<path d="M33.5 357.20000000000005 H40.5" stroke="#555" stroke-width="0.8" stroke-dasharray="1.5 1"/>
<rect x="40.59999999999991" y="352.50000000000006" width="9.5" height="9.4" rx="1.2" fill="#1c1c1c"/>
<path d="M41.59999999999991 357.50000000000006 H45" stroke="#ff2020" stroke-width="1.2"/><path d="M46 357.50000000000006 H49.299999999999955" stroke="#f0c020" stroke-width="1.2"/>
<path d="M45.5 353.50000000000006 V361.00000000000006" stroke="#80f000" stroke-width="1.6"/><path d="M44 355.40000000000003 L45.5 353.20000000000005 L47 355.40000000000003" fill="#80f000"/>
<path d="M33.5 371.75 H40.5" stroke="#555" stroke-width="0.8" stroke-dasharray="1.5 1"/>
<rect x="40.59999999999991" y="367.05" width="9.5" height="9.4" rx="1.2" fill="#1c1c1c"/>
<path d="M41.59999999999991 372.05 H45" stroke="#ff2020" stroke-width="1.2"/><path d="M46 372.05 H49.299999999999955" stroke="#f0c020" stroke-width="1.2"/>
<path d="M45.5 368.05 V375.55" stroke="#80f000" stroke-width="1.6"/><path d="M44 369.95 L45.5 367.75 L47 369.95" fill="#80f000"/>
<path d="M33.5 386.3 H40.5" stroke="#555" stroke-width="0.8" stroke-dasharray="1.5 1"/>
<rect x="40.59999999999991" y="381.6" width="9.5" height="9.4" rx="1.2" fill="#1c1c1c"/>
<path d="M41.59999999999991 386.6 H45" stroke="#ff2020" stroke-width="1.2"/><path d="M46 386.6 H49.299999999999955" stroke="#f0c020" stroke-width="1.2"/>
<path d="M45.5 382.6 V390.1" stroke="#80f000" stroke-width="1.6"/><path d="M44 384.5 L45.5 382.3 L47 384.5" fill="#80f000"/>
<path d="M33.5 400.85 H40.5" stroke="#555" stroke-width="0.8" stroke-dasharray="1.5 1"/>
<rect x="40.59999999999991" y="396.15000000000003" width="9.5" height="9.4" rx="1.2" fill="#1c1c1c"/>
<path d="M41.59999999999991 401.15000000000003 H45" stroke="#ff2020" stroke-width="1.2"/><path d="M46 401.15000000000003 H49.299999999999955" stroke="#f0c020" stroke-width="1.2"/>
<path d="M45.5 397.15000000000003 V404.65000000000003" stroke="#80f000" stroke-width="1.6"/><path d="M44 399.05 L45.5 396.85 L47 399.05" fill="#80f000"/>
<path d="M33.5 415.40000000000003 H40.5" stroke="#555" stroke-width="0.8" stroke-dasharray="1.5 1"/>
<rect x="40.59999999999991" y="410.70000000000005" width="9.5" height="9.4" rx="1.2" fill="#1c1c1c"/>
<path d="M41.59999999999991 415.70000000000005 H45" stroke="#ff2020" stroke-width="1.2"/><path d="M46 415.70000000000005 H49.299999999999955" stroke="#f0c020" stroke-width="1.2"/>
<path d="M45.5 411.70000000000005 V419.20000000000005" stroke="#80f000" stroke-width="1.6"/><path d="M44 413.6 L45.5 411.40000000000003 L47 413.6" fill="#80f000"/>
<path d="M33.5 429.95000000000005 H40.5" stroke="#555" stroke-width="0.8" stroke-dasharray="1.5 1"/>
<rect x="40.59999999999991" y="425.25000000000006" width="9.5" height="9.4" rx="1.2" fill="#1c1c1c"/>
<path d="M41.59999999999991 430.25000000000006 H45" stroke="#ff2020" stroke-width="1.2"/><path d="M46 430.25000000000006 H49.299999999999955" stroke="#f0c020" stroke-width="1.2"/>
<path d="M45.5 426.25000000000006 V433.75" stroke="#80f000" stroke-width="1.6"/><path d="M44 428.15000000000003 L45.5 425.95000000000005 L47 428.15000000000003" fill="#80f000"/>
<path d="M33.5 444.5 H40.5" stroke="#555" stroke-width="0.8" stroke-dasharray="1.5 1"/>
<rect x="40.59999999999991" y="439.79999999999995" width="9.5" height="9.4" rx="1.2" fill="#1c1c1c"/>
<path d="M41.59999999999991 444.79999999999995 H45" stroke="#ff2020" stroke-width="1.2"/><path d="M46 444.79999999999995 H49.299999999999955" stroke="#f0c020" stroke-width="1.2"/>
<path d="M45.5 440.79999999999995 V448.29999999999995" stroke="#80f000" stroke-width="1.6"/><path d="M44 442.70000000000005 L45.5 440.5 L47 442.70000000000005" fill="#80f000"/>
<path d="M33.5 459.04999999999995 H40.5" stroke="#555" stroke-width="0.8" stroke-dasharray="1.5 1"/>
<rect x="40.59999999999991" y="454.3499999999999" width="9.5" height="9.4" rx="1.2" fill="#1c1c1c"/>
<path d="M41.59999999999991 459.3499999999999 H45" stroke="#ff2020" stroke-width="1.2"/><path d="M46 459.3499999999999 H49.299999999999955" stroke="#f0c020" stroke-width="1.2"/>
<path d="M45.5 455.3499999999999 V462.8499999999999" stroke="#80f000" stroke-width="1.6"/><path d="M44 457.25 L45.5 455.04999999999995 L47 457.25" fill="#80f000"/>
<path d="M33.5 473.6 H40.5" stroke="#555" stroke-width="0.8" stroke-dasharray="1.5 1"/>
<rect x="40.59999999999991" y="468.9" width="9.5" height="9.4" rx="1.2" fill="#1c1c1c"/>
<path d="M41.59999999999991 473.9 H45" stroke="#ff2020" stroke-width="1.2"/><path d="M46 473.9 H49.299999999999955" stroke="#f0c020" stroke-width="1.2"/>
<path d="M45.5 469.9 V477.4" stroke="#80f000" stroke-width="1.6"/><path d="M44 471.80000000000007 L45.5 469.6 L47 471.80000000000007" fill="#80f000"/>
<path d="M33.5 488.1500000000001 H40.5" stroke="#555" stroke-width="0.8" stroke-dasharray="1.5 1"/>
<rect x="40.59999999999991" y="483.45000000000005" width="9.5" height="9.4" rx="1.2" fill="#1c1c1c"/>
<path d="M41.59999999999991 488.45000000000005 H45" stroke="#ff2020" stroke-width="1.2"/><path d="M46 488.45000000000005 H49.299999999999955" stroke="#f0c020" stroke-width="1.2"/>
<path d="M45.5 484.45000000000005 V491.95000000000005" stroke="#80f000" stroke-width="1.6"/><path d="M44 486.35000000000014 L45.5 484.1500000000001 L47 486.35000000000014" fill="#80f000"/>
<path d="M33.5 502.70000000000005 H40.5" stroke="#555" stroke-width="0.8" stroke-dasharray="1.5 1"/>
<rect x="40.59999999999991" y="498.0" width="9.5" height="9.4" rx="1.2" fill="#1c1c1c"/>
<path d="M41.59999999999991 503.0 H45" stroke="#ff2020" stroke-width="1.2"/><path d="M46 503.0 H49.299999999999955" stroke="#f0c020" stroke-width="1.2"/>
<path d="M45.5 499.0 V506.5" stroke="#80f000" stroke-width="1.6"/><path d="M44 500.9000000000001 L45.5 498.70000000000005 L47 500.9000000000001" fill="#80f000"/>
<path d="M33.5 517.25 H40.5" stroke="#555" stroke-width="0.8" stroke-dasharray="1.5 1"/>
<rect x="40.59999999999991" y="512.55" width="9.5" height="9.4" rx="1.2" fill="#1c1c1c"/>
<path d="M41.59999999999991 517.55 H45" stroke="#ff2020" stroke-width="1.2"/><path d="M46 517.55 H49.299999999999955" stroke="#f0c020" stroke-width="1.2"/>
<path d="M45.5 513.55 V521.05" stroke="#80f000" stroke-width="1.6"/><path d="M44 515.45 L45.5 513.25 L47 515.45" fill="#80f000"/>
<path d="M33.5 531.8000000000001 H40.5" stroke="#555" stroke-width="0.8" stroke-dasharray="1.5 1"/>
<rect x="40.59999999999991" y="527.1" width="9.5" height="9.4" rx="1.2" fill="#1c1c1c"/>
<path d="M41.59999999999991 532.1 H45" stroke="#ff2020" stroke-width="1.2"/><path d="M46 532.1 H49.299999999999955" stroke="#f0c020" stroke-width="1.2"/>
<path d="M45.5 528.1 V535.6" stroke="#80f000" stroke-width="1.6"/><path d="M44 530.0000000000001 L45.5 527.8000000000001 L47 530.0000000000001" fill="#80f000"/>
<path d="M33.5 546.35 H40.5" stroke="#555" stroke-width="0.8" stroke-dasharray="1.5 1"/>
<rect x="40.59999999999991" y="541.65" width="9.5" height="9.4" rx="1.2" fill="#1c1c1c"/>
<path d="M41.59999999999991 546.65 H45" stroke="#ff2020" stroke-width="1.2"/><path d="M46 546.65 H49.299999999999955" stroke="#f0c020" stroke-width="1.2"/>
<path d="M45.5 542.65 V550.15" stroke="#80f000" stroke-width="1.6"/><path d="M44 544.5500000000001 L45.5 542.35 L47 544.5500000000001" fill="#80f000"/>
<path d="M33.5 560.9 H40.5" stroke="#555" stroke-width="0.8" stroke-dasharray="1.5 1"/>
<rect x="40.59999999999991" y="556.1999999999999" width="9.5" height="9.4" rx="1.2" fill="#1c1c1c"/>
<path d="M41.59999999999991 561.1999999999999 H45" stroke="#ff2020" stroke-width="1.2"/><path d="M46 561.1999999999999 H49.299999999999955" stroke="#f0c020" stroke-width="1.2"/>
<path d="M45.5 557.1999999999999 V564.6999999999999" stroke="#80f000" stroke-width="1.6"/><path d="M44 559.1 L45.5 556.9 L47 559.1" fill="#80f000"/>
<path d="M33.5 575.45 H40.5" stroke="#555" stroke-width="0.8" stroke-dasharray="1.5 1"/>
<rect x="40.59999999999991" y="570.75" width="9.5" height="9.4" rx="1.2" fill="#1c1c1c"/>
<path d="M41.59999999999991 575.75 H45" stroke="#ff2020" stroke-width="1.2"/><path d="M46 575.75 H49.299999999999955" stroke="#f0c020" stroke-width="1.2"/>
<path d="M45.5 571.75 V579.25" stroke="#80f000" stroke-width="1.6"/><path d="M44 573.6500000000001 L45.5 571.45 L47 573.6500000000001" fill="#80f000"/>
<path d="M33.5 590.0 H40.5" stroke="#555" stroke-width="0.8" stroke-dasharray="1.5 1"/>
<rect x="40.59999999999991" y="585.3" width="9.5" height="9.4" rx="1.2" fill="#1c1c1c"/>
<path d="M41.59999999999991 590.3 H45" stroke="#ff2020" stroke-width="1.2"/><path d="M46 590.3 H49.299999999999955" stroke="#f0c020" stroke-width="1.2"/>
<path d="M45.5 586.3 V593.8" stroke="#80f000" stroke-width="1.6"/><path d="M44 588.2 L45.5 586.0 L47 588.2" fill="#80f000"/>
</svg>
<div class="t" style="left:1142.3px;top:96.2px;font-size:9.5px;color:#222">320*384</div>
<div class="t" style="left:1142.3px;top:139.9px;font-size:9.5px;color:#222">192*80</div>
<div class="t" style="left:1129.5px;top:82.6px;font-size:9px;font-weight:bold;color:#111">设备列表</div>
<div class="abs" style="left:1152px;top:109.1px;width:58px;height:14px;background:#b3c6e6"></div>
<div class="t" style="left:1152px;top:112.0px;font-size:9.3px;color:#f4f6fa">螺丝湾桥测试</div>
<div class="t" style="left:1154.3px;top:126.6px;font-size:9.3px;color:#a0a0a0">维扬岗测试</div>
<div class="t" style="left:1154.3px;top:155.7px;font-size:9.3px;color:#33c633">体育岗西</div>
<div class="t" style="left:1154.3px;top:170.2px;font-size:9.3px;color:#33c633">火车站岗东</div>
<div class="t" style="left:1154.3px;top:184.8px;font-size:9.3px;color:#33c633">火车站岗西</div>
<div class="t" style="left:1154.3px;top:199.3px;font-size:9.3px;color:#33c633">体育岗东</div>
<div class="t" style="left:1154.3px;top:213.9px;font-size:9.3px;color:#33c633">来鹤台岗东</div>
<div class="t" style="left:1154.3px;top:228.4px;font-size:9.3px;color:#33c633">来鹤台岗西</div>
<div class="t" style="left:1154.3px;top:243.0px;font-size:9.3px;color:#33c633">双博岗东</div>
<div class="t" style="left:1154.3px;top:257.5px;font-size:9.3px;color:#33c633">双博岗西</div>
<div class="t" style="left:1154.3px;top:272.0px;font-size:9.3px;color:#33c633">邗中岗东</div>
<div class="t" style="left:1154.3px;top:286.6px;font-size:9.3px;color:#a0a0a0">邗中岗西</div>
<div class="t" style="left:1154.3px;top:301.1px;font-size:9.3px;color:#33c633">水利岗东</div>
<div class="t" style="left:1154.3px;top:315.7px;font-size:9.3px;color:#33c633">水利岗西</div>
<div class="t" style="left:1154.3px;top:330.2px;font-size:9.3px;color:#33c633">海关岗东</div>
<div class="t" style="left:1154.3px;top:344.8px;font-size:9.3px;color:#33c633">海关岗西</div>
<div class="t" style="left:1154.3px;top:359.3px;font-size:9.3px;color:#33c633">市府岗东</div>
<div class="t" style="left:1154.3px;top:373.9px;font-size:9.3px;color:#33c633">市府岗西</div>
<div class="t" style="left:1154.3px;top:388.4px;font-size:9.3px;color:#33c633">京华岗东</div>
<div class="t" style="left:1154.3px;top:403.0px;font-size:9.3px;color:#33c633">京华岗西</div>
<div class="t" style="left:1154.3px;top:417.6px;font-size:9.3px;color:#a0a0a0">石塔岗东</div>
<div class="t" style="left:1154.3px;top:432.1px;font-size:9.3px;color:#33c633">石塔岗西</div>
<div class="t" style="left:1154.3px;top:446.6px;font-size:9.3px;color:#33c633">文昌阁岗东</div>
<div class="t" style="left:1154.3px;top:461.2px;font-size:9.3px;color:#33c633">文昌阁岗西</div>
<div class="t" style="left:1154.3px;top:475.8px;font-size:9.3px;color:#33c633">琼花岗东</div>
<div class="t" style="left:1154.3px;top:490.3px;font-size:9.3px;color:#33c633">琼花岗西</div>
<div class="t" style="left:1154.3px;top:504.9px;font-size:9.3px;color:#33c633">银河岗东</div>
<div class="t" style="left:1154.3px;top:519.4px;font-size:9.3px;color:#33c633">银河岗西</div>
<div class="t" style="left:1154.3px;top:533.9px;font-size:9.3px;color:#33c633">解放桥岗东</div>
<div class="t" style="left:1154.3px;top:548.5px;font-size:9.3px;color:#33c633">解放桥岗西</div>
<div class="t" style="left:1154.3px;top:563.1px;font-size:9.3px;color:#33c633">解放桥东岗东</div>
<div class="t" style="left:1154.3px;top:577.6px;font-size:9.3px;color:#a0a0a0">解放桥东岗西</div>
<div class="t" style="left:1154.3px;top:592.1px;font-size:9.3px;color:#33c633">沙北岗东</div>
<div class="t" style="left:1154.3px;top:606.7px;font-size:9.3px;color:#33c633">沙北岗西</div>
<div class="t" style="left:1154.3px;top:621.2px;font-size:9.3px;color:#33c633">鸿泰岗东</div>
<div class="t" style="left:1154.3px;top:635.8px;font-size:9.3px;color:#33c633">鸿泰岗西</div>
<div class="t" style="left:1154.3px;top:650.4px;font-size:9.3px;color:#33c633">国展岗东</div>
<div class="t" style="left:1154.3px;top:664.9px;font-size:9.3px;color:#33c633">国展岗西</div>
</body></html>
